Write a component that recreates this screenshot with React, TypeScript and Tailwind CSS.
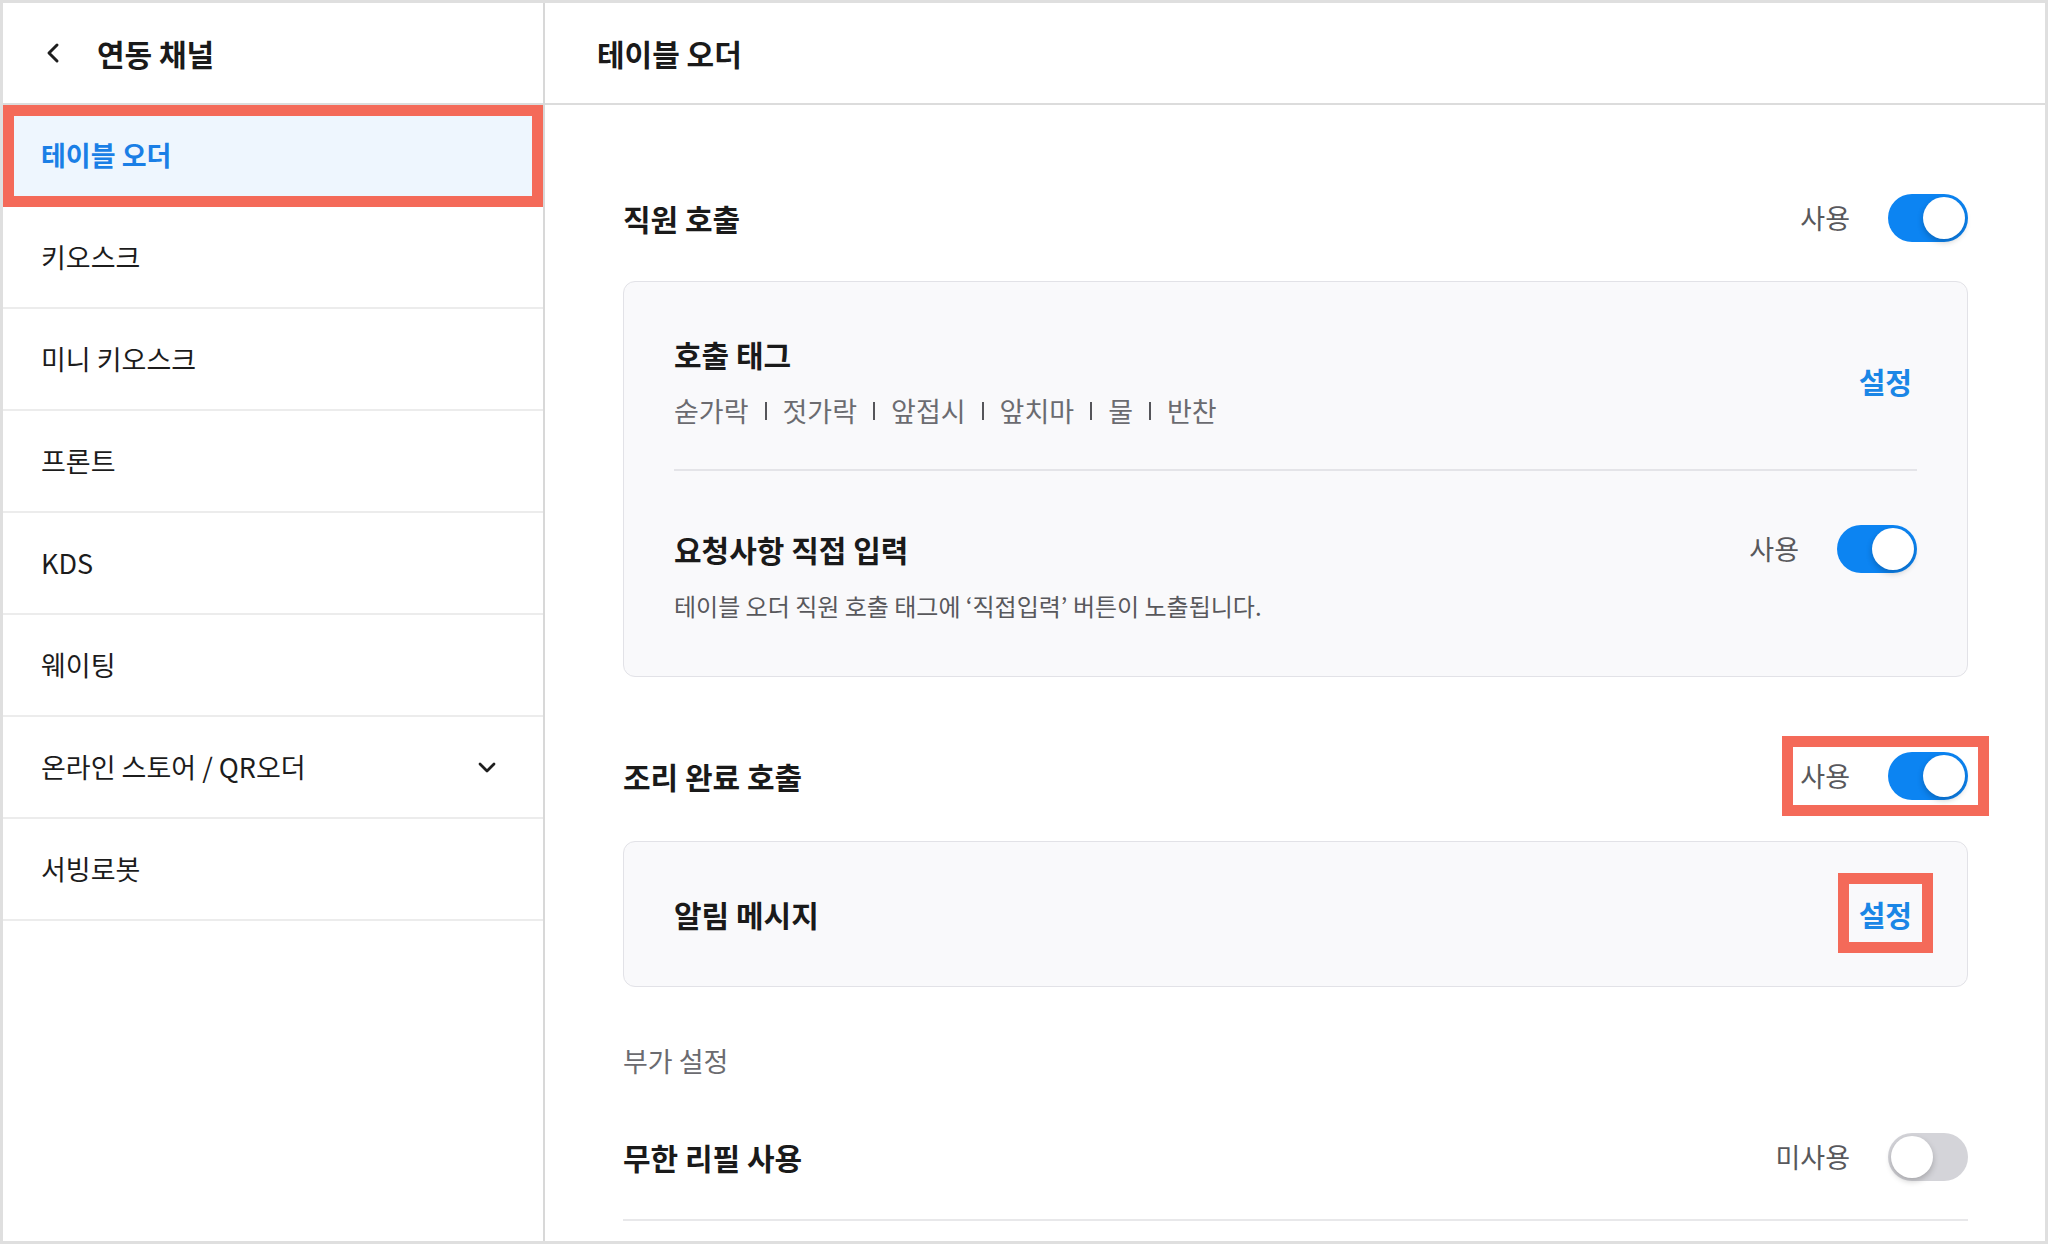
import React from 'react';

const sideItems = [
  { label: '테이블 오더', active: true },
  { label: '키오스크' },
  { label: '미니 키오스크' },
  { label: '프론트' },
  { label: 'KDS' },
  { label: '웨이팅' },
  { label: '온라인 스토어 / QR오더', expand: true },
  { label: '서빙로봇' },
];

const tags = ['숟가락', '젓가락', '앞접시', '앞치마', '물', '반찬'];

// annotation box drawn over a highlighted element
const Marker = ({ className = '' }: { className?: string }) => (
  <div className={`pointer-events-none absolute border-[11px] border-[#f46a59] ${className}`} />
);

const Toggle = ({ on }: { on: boolean }) => (
  <div
    className={`flex h-[48px] w-[80px] items-center rounded-full p-[3px] ${
      on ? 'justify-end bg-[#0c84f2]' : 'justify-start bg-[#d4d4d9]'
    }`}
  >
    <div className="h-[42px] w-[42px] rounded-full bg-white shadow-[0_3px_6px_rgba(0,0,0,0.22)]" />
  </div>
);

const UseLabel = ({ text }: { text: string }) => (
  <span className="text-[27px] leading-[34px] text-[#58585c]">{text}</span>
);

const Sidebar = () => (
  <aside className="flex w-[542px] shrink-0 flex-col border-r-2 border-[#d8d8d8]">
    <div className="flex h-[102px] items-center border-b-2 border-[#dcdcdc] pl-[42px]">
      <svg width="16" height="24" viewBox="0 0 16 24" fill="none">
        <path d="M12 4 L4 12 L12 20" stroke="#1e1e1e" strokeWidth="3" strokeLinecap="round" strokeLinejoin="round" />
      </svg>
      <h1 className="ml-[36px] text-[30px] font-bold leading-[38px] text-[#1a1a1a]">연동 채널</h1>
    </div>
    {sideItems.map((item) => (
      <div
        key={item.label}
        className={`relative flex h-[102px] items-center justify-between border-b-2 border-[#ececec] pl-[38px] pr-[47px] ${
          item.active ? 'bg-[#eef6fe]' : ''
        }`}
      >
        <span
          className={`text-[27px] leading-[36px] ${
            item.active ? 'font-semibold text-[#1a7fe6]' : 'text-[#1c1c1c]'
          }`}
        >
          {item.label}
        </span>
        {item.expand && (
          <svg width="18" height="11" viewBox="0 0 18 11" fill="none">
            <path d="M2 2 L9 9 L16 2" stroke="#1e1e1e" strokeWidth="2.8" strokeLinecap="round" strokeLinejoin="round" />
          </svg>
        )}
        {item.active && <Marker className="inset-0 -bottom-[2px]" />}
      </div>
    ))}
  </aside>
);

const SectionRow = ({ title, right }: { title: string; right: React.ReactNode }) => (
  <div className="flex h-[76px] items-center justify-between">
    <h2 className="text-[30px] font-bold leading-[36px] text-[#1a1a1a]">{title}</h2>
    {right}
  </div>
);

const Card = ({ children, className = '' }: { children: React.ReactNode; className?: string }) => (
  <div className={`rounded-[12px] border border-[#e2e2e7] bg-[#f9f9fb] px-[50px] ${className}`}>{children}</div>
);

const SettingLink = () => <span className="text-[29px] font-bold leading-[34px] text-[#1a86e6]">설정</span>;

const Main = () => (
  <main className="flex min-w-0 flex-1 flex-col">
    <div className="flex h-[102px] items-center border-b-2 border-[#dcdcdc] pl-[52px]">
      <h1 className="text-[30px] font-bold leading-[38px] text-[#1a1a1a]">테이블 오더</h1>
    </div>

    <div className="flex flex-col pl-[78px] pr-[77px] pt-[75px]">
      <SectionRow
        title="직원 호출"
        right={
          <div className="flex items-center gap-[38px]">
            <UseLabel text="사용" />
            <Toggle on />
          </div>
        }
      />

      <Card className="mt-[25px]">
        <div className="flex items-center justify-between pb-[42px] pt-[54px]">
          <div className="flex flex-col gap-[23px]">
            <h3 className="text-[30px] font-bold leading-[36px] text-[#1a1a1a]">호출 태그</h3>
            <div className="flex items-center text-[27px] leading-[32px] text-[#6b6b70]">
              {tags.map((t, i) => (
                <React.Fragment key={t}>
                  {i > 0 && <span className="mx-[16px] h-[18px] w-[2px] bg-[#55555a]" />}
                  <span>{t}</span>
                </React.Fragment>
              ))}
            </div>
          </div>
          <div className="pr-[5px]">
            <SettingLink />
          </div>
        </div>
        <div className="h-[2px] bg-[#e4e4e8]" />
        <div className="flex flex-col gap-[18px] pb-[55px] pt-[54px]">
          <div className="flex items-center justify-between">
            <h3 className="text-[30px] font-bold leading-[36px] text-[#1a1a1a]">요청사항 직접 입력</h3>
            <div className="flex items-center gap-[38px]">
              <UseLabel text="사용" />
              <Toggle on />
            </div>
          </div>
          <p className="text-[24px] leading-[30px] text-[#58585c]">
            테이블 오더 직원 호출 태그에 ‘직접입력’ 버튼이 노출됩니다.
          </p>
        </div>
      </Card>

      <div className="mt-[61px]">
        <SectionRow
          title="조리 완료 호출"
          right={
            <div className="relative flex items-center gap-[38px]">
              <UseLabel text="사용" />
              <Toggle on />
              <Marker className="-bottom-[16px] -left-[18px] -right-[21px] -top-[16px]" />
            </div>
          }
        />
      </div>

      <Card className="mt-[27px]">
        <div className="flex h-[144px] items-center justify-between">
          <h3 className="text-[30px] font-bold leading-[36px] text-[#1a1a1a]">알림 메시지</h3>
          <div className="relative pr-[5px]">
            <SettingLink />
            <Marker className="-bottom-[21px] -left-[21px] -right-[16px] -top-[24px]" />
          </div>
        </div>
      </Card>

      <div className="mt-[58px] text-[27px] leading-[32px] text-[#6b6b70]">부가 설정</div>

      <div className="mt-[42px]">
        <SectionRow
          title="무한 리필 사용"
          right={
            <div className="flex items-center gap-[38px]">
              <UseLabel text="미사용" />
              <Toggle on={false} />
            </div>
          }
        />
      </div>
      <div className="mt-[24px] h-[2px] bg-[#e8e8ea]" />
    </div>
  </main>
);

export default function App() {
  return (
    <div className="flex h-[1244px] w-[2048px] overflow-hidden border-[3px] border-[#dfdfdf] bg-white font-['Noto_Sans_CJK_KR','Noto_Sans',sans-serif]">
      <Sidebar />
      <Main />
    </div>
  );
}
